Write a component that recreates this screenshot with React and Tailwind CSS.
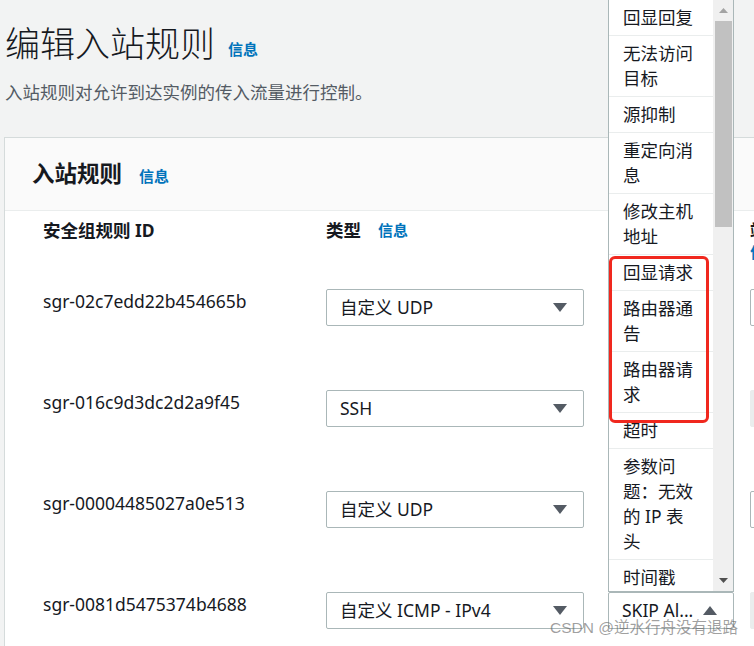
import React from 'react';

const rules = [
  { id: 'sgr-02c7edd22b454665b', type: '自定义 UDP', port: 'edit' },
  { id: 'sgr-016c9d3dc2d2a9f45', type: 'SSH', port: 'locked' },
  { id: 'sgr-00004485027a0e513', type: '自定义 UDP', port: 'edit' },
  { id: 'sgr-0081d5475374b4688', type: '自定义 ICMP - IPv4', port: 'locked', protocol: 'SKIP Al...' },
];

// ICMP types in the open list, split into the lines they wrap to
const icmpTypes = [
  ['回显回复'],
  ['无法访问', '目标'],
  ['源抑制'],
  ['重定向消', '息'],
  ['修改主机', '地址'],
  ['回显请求'],
  ['路由器通', '告'],
  ['路由器请', '求'],
  ['超时'],
  ['参数问', '题：无效', '的 IP 表', '头'],
  ['时间戳'],
  ['时间戳回复'],
];

const Caret = ({ up }) => (
  <svg width="14" height="9" viewBox="0 0 14 9" className="shrink-0">
    <path d={up ? 'M0 9 L7 0 L14 9 Z' : 'M0 0 L14 0 L7 9 Z'} fill="#545b64" />
  </svg>
);

const InfoLink = ({ className = '' }) => (
  <a className={`text-[15px] leading-[20px] font-bold text-[#0073bb] ${className}`}>信息</a>
);

const Select = ({ value, up, className = '' }) => (
  <div className={`h-[37px] flex items-center justify-between pl-[13px] pr-[16px] bg-white border border-[#aab7b8] rounded-[2px] ${className}`}>
    <span className="text-[17.5px] text-[#16191f] whitespace-nowrap">{value}</span>
    <Caret up={up} />
  </div>
);

const IcmpMenu = () => (
  <div className="absolute left-[608px] top-0 w-[126px] h-[592px] flex bg-white border border-t-0 border-[#aab7b8]">
    <ul className="w-[104px] overflow-hidden">
      {icmpTypes.map((lines, i) => (
        <li key={i} className="px-[14px] py-[5px] border-b border-[#eaeded] text-[17.5px] leading-[25px] text-[#16191f]">
          {lines.map((l, j) => (
            <span key={j} className="block whitespace-nowrap">{l}</span>
          ))}
        </li>
      ))}
    </ul>
    <div className="w-[20px] flex flex-col items-center bg-[#f0f0f0]">
      <div className="h-[21px] flex items-center justify-center">
        <svg width="9" height="5" viewBox="0 0 9 5"><path d="M0 5 L4.5 0 L9 5 Z" fill="#a3a3a3" /></svg>
      </div>
      <div className="w-[17px] h-[206px] bg-[#c1c1c1]"></div>
      <div className="flex-1"></div>
      <div className="h-[21px] flex items-center justify-center">
        <svg width="9" height="5" viewBox="0 0 9 5"><path d="M0 0 L9 0 L4.5 5 Z" fill="#505050" /></svg>
      </div>
    </div>
  </div>
);

export default function App() {
  return (
    <div className="relative w-[754px] h-[646px] overflow-hidden bg-[#f2f3f3] text-[#16191f] font-['Noto_Sans','Noto_Sans_CJK_SC',sans-serif]">
      <div className="pl-[5px] pt-[23px]">
        <div className="flex items-center gap-[13px]">
          <h1 className="text-[35px] leading-[42px] font-light whitespace-nowrap">编辑入站规则</h1>
          <InfoLink className="pt-[10px]" />
        </div>
        <p className="mt-[15px] text-[17.5px] leading-[24px] text-[#545b64] whitespace-nowrap">
          入站规则对允许到达实例的传入流量进行控制。
        </p>
      </div>

      <div className="mt-[33px] ml-[4px] w-[1000px] bg-white border-l border-t border-[#d5dbdb]">
        <div className="h-[73px] flex items-center gap-[17px] pl-[27px] bg-[#fafafa] border-b border-[#eaeded]">
          <h2 className="text-[22.5px] leading-[30px] font-bold">入站规则</h2>
          <InfoLink className="pt-[4px]" />
        </div>

        <div className="pl-[38px]">
          <div className="h-[78px] pt-[7px] grid grid-cols-[283px_282px_142px_220px] items-start text-[17.5px] leading-[24px] font-bold">
            <div className="whitespace-nowrap">安全组规则 ID</div>
            <div className="flex items-center gap-[17px]">
              <span>类型</span>
              <InfoLink />
            </div>
            <div></div>
            <div className="flex flex-col">
              <span className="whitespace-nowrap">端口范围</span>
              <InfoLink />
            </div>
          </div>

          {rules.map((r) => (
            <div key={r.id} className="h-[101px] grid grid-cols-[283px_282px_142px_220px] items-start">
              <div className="text-[17.5px] leading-[24px] whitespace-nowrap">{r.id}</div>
              <Select value={r.type} className="w-[258px]" />
              {r.protocol ? (
                <Select value={r.protocol} up className="w-[126px] pr-[15px]" />
              ) : (
                <div></div>
              )}
              {r.port === 'edit' ? (
                <div className="h-[37px] w-[200px] bg-white border border-[#aab7b8] rounded-[2px]"></div>
              ) : (
                <div className="h-[37px] w-[200px] bg-[#eaeded] border border-[#eaeded] rounded-[2px]"></div>
              )}
            </div>
          ))}
        </div>
      </div>

      <IcmpMenu />

      <div className="absolute left-[609px] top-[256px] w-[100px] h-[167px] border-[3px] border-[#f0281e] rounded-[6px]"></div>

      <div className="absolute right-[16px] bottom-[8px] text-[15.5px] leading-[20px] text-[rgba(95,95,95,0.6)] whitespace-nowrap font-['Liberation_Sans','Noto_Sans_CJK_SC',sans-serif]">
        CSDN @逆水行舟没有退路
      </div>
    </div>
  );
}
